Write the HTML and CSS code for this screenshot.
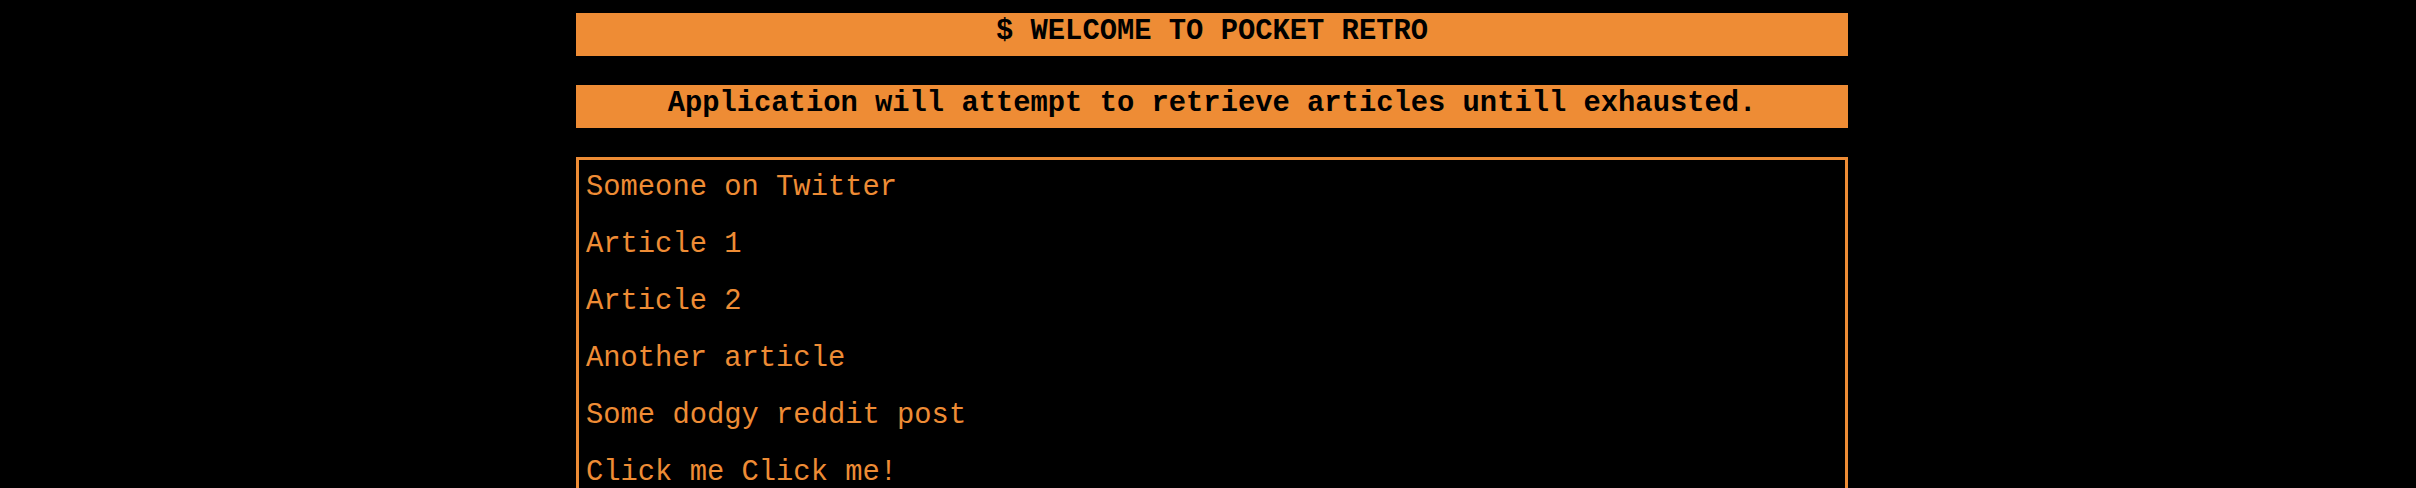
FILE: index.html
```html
<!DOCTYPE html>
<html>
<head>
<meta charset="utf-8">
<title>Pocket Retro</title>
<link rel="stylesheet" href="styles.css">
</head>
<body>
<main class="app">
  <h1 class="bar title">$ WELCOME TO POCKET RETRO</h1>
  <h2 class="bar notice">Application will attempt to retrieve articles untill exhausted.</h2>
  <ul class="articles">
    <li class="article">Someone on Twitter</li>
    <li class="article">Article 1</li>
    <li class="article">Article 2</li>
    <li class="article">Another article</li>
    <li class="article">Some dodgy reddit post</li>
    <li class="article">Click me Click me!</li>
  </ul>
</main>
</body>
</html>
```

FILE: styles.css
```css
html, body {
  margin: 0;
  padding: 0;
  background: #000;
}
body {
  font-family: "Liberation Mono", monospace;
  color: #ee8c35;
}
.app {
  width: 1272px;
  margin-left: 576px;
  padding-top: 13px;
  display: flex;
  flex-direction: column;
  gap: 29px;
}
.bar {
  margin: 0;
  background: #ee8c35;
  color: #000;
  font-size: 28.8px;
  font-weight: bold;
  text-align: center;
  height: 43px;
  line-height: 33px;
  padding-top: 2px;
  box-sizing: border-box;
}
.articles {
  list-style: none;
  margin: 0;
  padding: 0 0 0 7px;
  border: 3px solid #ee8c35;
  font-size: 28.8px;
}
.article {
  padding: 10.5px 0 13.5px;
  line-height: 33px;
}
```
